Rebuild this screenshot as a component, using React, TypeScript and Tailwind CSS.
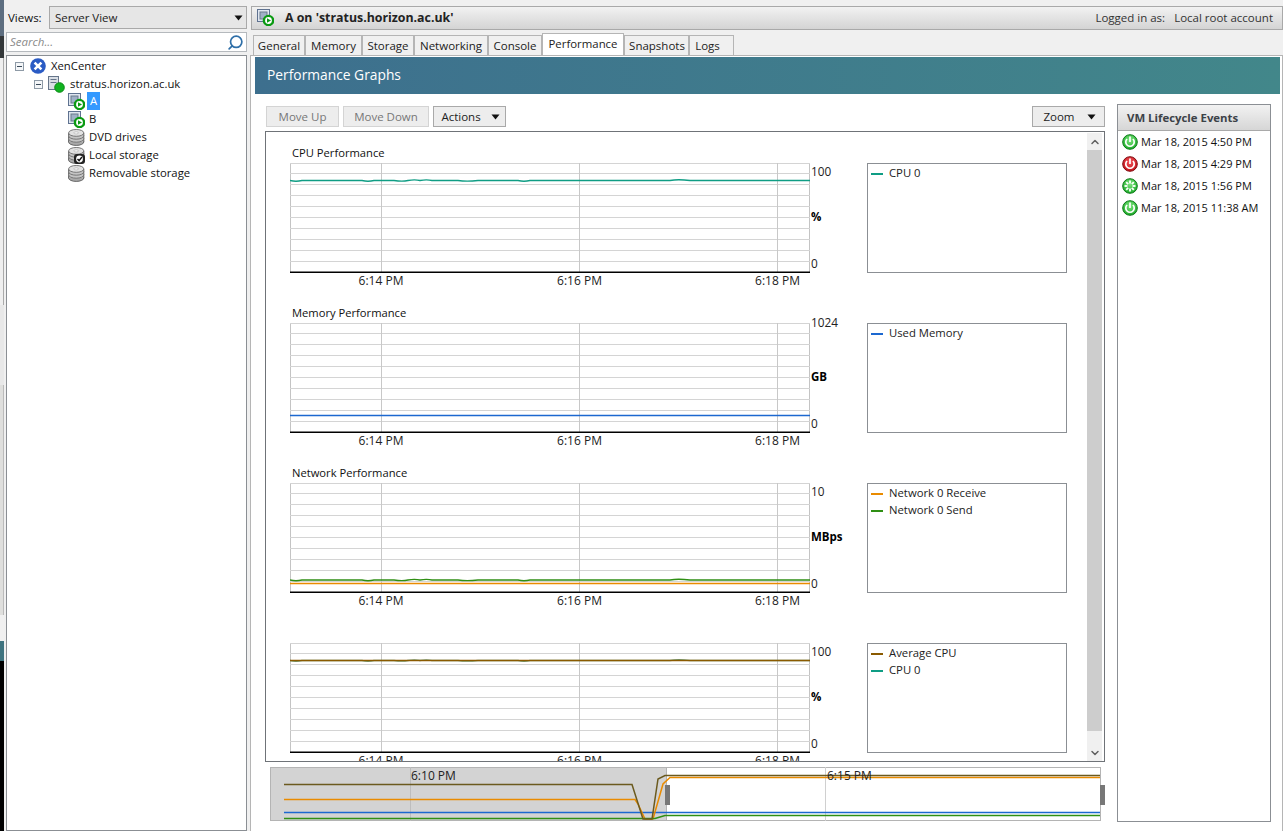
import { ChevronDown, ChevronUp, Search } from "lucide-react";

const ui = "font-['Open_Sans','Noto_Sans',sans-serif]";

const wobble =
  "c4 1 8 1 12 0 h60 c4 1 8 1 12 0 h20 c6 1 10 1 14 0 c5 -1 8 -1 12 0 c5 -1 8 -1 12 0 h26 c6 1 12 1 20 0 h40 c4 1 8 1 12 0 h140 c5 -1 12 -1 20 0 h120";

function Plot({ lines }: { lines: { y: number; color: string; wavy?: boolean }[] }) {
  const rows = [0, 10, 21, 32, 43, 54, 65, 76, 87, 98];
  return (
    <svg width="520" height="110" className="block shrink-0">
      <rect x="0.5" y="0.5" width="519" height="109" fill="white" stroke="#c4c4c4" />
      {rows.map((y) => (
        <line key={y} x1="0" x2="520" y1={y + 0.5} y2={y + 0.5} stroke="#d4d4d4" />
      ))}
      {[91, 289, 487].map((x) => (
        <line key={x} x1={x + 0.5} x2={x + 0.5} y1="0" y2="109" stroke="#c8c8c8" />
      ))}
      {lines.map((l, i) =>
        l.wavy ? (
          <path key={i} d={`M0 ${l.y} ${wobble}`} fill="none" stroke={l.color} strokeWidth="1.3" />
        ) : (
          <line key={i} x1="0" x2="520" y1={l.y} y2={l.y} stroke={l.color} strokeWidth="1.4" />
        )
      )}
      <line x1="0" x2="520" y1="109.2" y2="109.2" stroke="#000" strokeWidth="1.6" />
    </svg>
  );
}

function Graph({
  title,
  top,
  topClass = "",
  unit,
  legend,
  lines,
}: {
  title?: string;
  top: string;
  topClass?: string;
  unit: string;
  legend: { label: string; color: string }[];
  lines: { y: number; color: string; wavy?: boolean }[];
}) {
  return (
    <div className="h-[160px] shrink-0 pl-[24px] pt-[12px]">
      <div className="h-[19px] pl-[2px] text-[11.2px] leading-[17px] text-[#111]">{title}</div>
      <div className="flex">
        <Plot lines={lines} />
        <div className="flex h-[110px] w-[57px] shrink-0 flex-col justify-between pb-[2px] pl-[1px] text-[11.8px] leading-[16px] text-[#222]">
          <span className={topClass}>{top}</span>
          <span className="text-[11.5px] font-bold text-black">{unit}</span>
          <span>0</span>
        </div>
        <div className="h-[110px] w-[200px] shrink-0 border border-[#8b8f94] pl-[3px] pt-[1px]">
          {legend.map((l) => (
            <div key={l.label} className="flex h-[17px] items-center text-[11.3px] text-[#222]">
              <span className={`h-[2px] w-[12px] ${l.color}`} />
              <span className="ml-[6px]">{l.label}</span>
            </div>
          ))}
        </div>
      </div>
      <div className="flex h-[20px] text-[12px] leading-[15px] text-[#222]">
        <span className="w-[182px] shrink-0 text-center">6:14 PM</span>
        <span className="w-[215px] shrink-0 text-center">6:16 PM</span>
        <span className="w-[181px] shrink-0 text-center">6:18 PM</span>
      </div>
    </div>
  );
}

function VmIcon({ className = "" }: { className?: string }) {
  return (
    <svg width="17" height="17" viewBox="0 0 17 17" className={className}>
      <rect x="0.5" y="0.5" width="12" height="12" fill="#dfe6f0" stroke="#5f7290" />
      <rect x="3" y="3" width="7" height="7" fill="#9fb0c6" stroke="#6b7a8c" />
      <circle cx="11.5" cy="11.5" r="4.6" fill="#fff" stroke="#0a9a12" strokeWidth="2.4" />
      <path d="M10 9.2 L14 11.5 L10 13.8 Z" fill="#0a9a12" />
    </svg>
  );
}

function DiskIcon({ check }: { check?: boolean }) {
  return (
    <svg width="17" height="17" viewBox="0 0 17 17">
      <ellipse cx="8.2" cy="13" rx="7.6" ry="3.4" fill="#a9a9a9" stroke="#666" />
      <rect x="0.6" y="4" width="15.2" height="9" fill="#bdbdbd" />
      <line x1="0.6" x2="0.6" y1="4" y2="13" stroke="#666" />
      <line x1="15.8" x2="15.8" y1="4" y2="13" stroke="#666" />
      <ellipse cx="8.2" cy="9.8" rx="7.6" ry="3.4" fill="#c4c4c4" stroke="#777" />
      <ellipse cx="8.2" cy="6.8" rx="7.6" ry="3.4" fill="#c4c4c4" stroke="#777" />
      <ellipse cx="8.2" cy="3.9" rx="7.6" ry="3.4" fill="#e2e2e2" stroke="#777" />
      <ellipse cx="8.2" cy="3.9" rx="2.5" ry="1" fill="#fff" stroke="#999" strokeWidth="0.5" />
      {check && (
        <g>
          <rect x="6" y="7" width="11" height="10" rx="3" fill="#222" />
          <circle cx="11.5" cy="12" r="3.4" fill="#fff" />
          <path d="M9.5 12 L11.1 13.6 L13.9 10" fill="none" stroke="#111" strokeWidth="1.4" />
        </g>
      )}
    </svg>
  );
}

function Expander() {
  return (
    <span className="flex h-[9px] w-[9px] shrink-0 items-center justify-center border border-[#8e9aa6] bg-[#f4f6f8]">
      <span className="h-[1px] w-[5px] bg-[#3a4a5a]" />
    </span>
  );
}

function Caret() {
  return (
    <svg width="9" height="6" viewBox="0 0 9 6" className="shrink-0">
      <path d="M0.5 0.5 H8.5 L4.5 5.5 Z" fill="#111" />
    </svg>
  );
}

function EventIcon({ kind }: { kind: "on" | "off" | "boot" }) {
  const red = kind === "off";
  const rim = red ? "#7f0a0f" : "#0b7a16";
  const id = `event-${kind}`;
  return (
    <svg width="16" height="16" viewBox="0 0 16 16" className="shrink-0">
      <defs>
        <radialGradient id={id} cx="50%" cy="35%" r="70%">
          <stop offset="0%" stopColor={red ? "#f2535a" : "#7fe67f"} />
          <stop offset="100%" stopColor={red ? "#c00d14" : "#14a622"} />
        </radialGradient>
      </defs>
      <circle cx="8" cy="8" r="7.3" fill={`url(#${id})`} stroke={rim} />
      {kind === "boot" ? (
        <g stroke="#fff" strokeWidth="1.8">
          <line x1="8" y1="2.5" x2="8" y2="5.5" />
          <line x1="8" y1="10.5" x2="8" y2="13.5" />
          <line x1="2.5" y1="8" x2="5.5" y2="8" />
          <line x1="10.5" y1="8" x2="13.5" y2="8" />
          <line x1="4.2" y1="4.2" x2="6.2" y2="6.2" />
          <line x1="9.8" y1="9.8" x2="11.8" y2="11.8" />
          <line x1="11.8" y1="4.2" x2="9.8" y2="6.2" />
          <line x1="6.2" y1="9.8" x2="4.2" y2="11.8" />
        </g>
      ) : (
        <g fill="none" stroke="#fff" strokeWidth="1.7">
          <path d="M5.1 5 A4.2 4.2 0 1 0 10.9 5" />
          <line x1="8" y1="2.6" x2="8" y2="8" />
        </g>
      )}
    </svg>
  );
}

function TreeRow({
  icon,
  label,
  selected,
}: {
  icon: React.ReactNode;
  label: string;
  selected?: boolean;
}) {
  return (
    <div className="flex h-[18px] items-center pl-[53px]">
      {icon}
      <span
        className={
          selected
            ? "ml-[2px] bg-[#3399ff] px-[3px] leading-[18px] text-white"
            : "ml-[4px] leading-[18px]"
        }
      >
        {label}
      </span>
    </div>
  );
}

function ToolButton({
  label,
  disabled,
  menu,
  width,
  gap = "gap-[9px]",
}: {
  label: string;
  disabled?: boolean;
  menu?: boolean;
  width: string;
  gap?: string;
}) {
  return (
    <div
      className={`flex h-[21px] items-center justify-center border text-[11.5px] ${gap} ${width} ${
        disabled
          ? "border-[#d4d4d4] bg-[#ededed] text-[#777]"
          : "border-[#a9a9a9] bg-[#ededed] text-[#222]"
      }`}
    >
      {label}
      {menu && <Caret />}
    </div>
  );
}

const tabs = [
  ["General", "w-[52px]"],
  ["Memory", "w-[57px]"],
  ["Storage", "w-[52px]"],
  ["Networking", "w-[74px]"],
  ["Console", "w-[54px]"],
];

export default function App() {
  return (
    <div className={`${ui} flex h-[831px] w-[1283px] overflow-hidden bg-[#f0f0f0] text-[11.5px] text-[#222]`}>
      {/* sliver of the desktop behind the window */}
      <div className="flex w-[6px] shrink-0 flex-col pr-[2px]">
        <div className="h-[36px] bg-[#5d6e80]" />
        <div className="h-[22px] bg-[#34383a]" />
        <div className="h-[247px] border-r border-[#aaa] bg-[#efefef]" />
        <div className="h-[80px] bg-[#e8e8e8]" />
        <div className="h-[230px] border-r border-[#bbb] bg-[#dfdfdd]" />
        <div className="h-[26px] bg-[#f0f0f0]" />
        <div className="h-[20px] bg-[#3f7480]" />
        <div className="flex-1 bg-black" />
      </div>

      <div className="flex w-[241px] shrink-0 flex-col pt-[6px]">
        <div className="flex h-[23px] items-center">
          <span className="ml-[2px] w-[41px] text-[#111]">Views:</span>
          <div className="flex h-[23px] flex-1 items-center justify-between border border-[#a9a9a9] bg-[#e6e6e6] pl-[5px] pr-[3px] text-[#222]">
            Server View
            <Caret />
          </div>
        </div>
        <div className="mt-[3px] flex h-[20px] items-center justify-between border border-[#b5b9bd] bg-white pl-[3px] pr-[2px]">
          <span className="italic text-[#8a8a8a]">Search...</span>
          <Search size={17} strokeWidth={2.4} className="-scale-x-100 text-[#2f6fa8]" />
        </div>
        <div className="mt-[3px] flex-1 border border-[#8b8f94] bg-white pl-[8px] pt-[1px] text-[11.3px] text-[#111]">
          <div className="flex h-[18px] items-center">
            <Expander />
            <svg width="16" height="16" viewBox="0 0 16 16" className="ml-[6px]">
              <circle cx="8" cy="8" r="7.8" fill="#2a5bc4" />
              <path d="M4.6 4.6 L11.4 11.4 M11.4 4.6 L4.6 11.4" stroke="#fff" strokeWidth="2.6" />
            </svg>
            <span className="ml-[5px]">XenCenter</span>
          </div>
          <div className="flex h-[17px] items-center pl-[19px] pt-[1px]">
            <Expander />
            <svg width="17" height="17" viewBox="0 0 17 17" className="ml-[5px]">
              <rect x="0.5" y="0.5" width="10" height="13" fill="#d9dee5" stroke="#66758a" />
              <line x1="2.5" x2="8.5" y1="3.5" y2="3.5" stroke="#66758a" />
              <line x1="2.5" x2="8.5" y1="6.5" y2="6.5" stroke="#66758a" />
              <circle cx="11.5" cy="11.5" r="4.8" fill="#10b320" stroke="#0b8a16" />
            </svg>
            <span className="ml-[5px]">stratus.horizon.ac.uk</span>
          </div>
          <TreeRow icon={<VmIcon />} label="A" selected />
          <TreeRow icon={<VmIcon />} label="B" />
          <TreeRow icon={<DiskIcon />} label="DVD drives" />
          <TreeRow icon={<DiskIcon check />} label="Local storage" />
          <TreeRow icon={<DiskIcon />} label="Removable storage" />
        </div>
      </div>

      <div className="ml-[3px] flex w-[1033px] shrink-0 flex-col pt-[6px]">
        <div className="ml-[1px] flex h-[24px] items-center justify-between border border-[#a9a9a9] bg-gradient-to-b from-[#f2f2f2] to-[#d4d4d4] pl-[5px] pr-[9px]">
          <div className="flex items-center">
            <VmIcon />
            <span className="ml-[11px] text-[12.35px] font-bold text-[#222]">A on 'stratus.horizon.ac.uk'</span>
          </div>
          <span className="text-[#333]">
            Logged in as:<span className="ml-[9px]">Local root account</span>
          </span>
        </div>

        <div className="mt-[3px] flex h-[22px] items-end pl-[3px]">
          {tabs.map(([name, w]) => (
            <div
              key={name}
              className={`flex h-[20px] items-center justify-center border border-b-0 border-[#b5b5b5] bg-[#f0f0f0] ${w}`}
            >
              {name}
            </div>
          ))}
          <div className="flex h-[22px] w-[82px] items-center justify-center border border-b-0 border-[#b5b5b5] bg-white pb-[1px] text-[11.4px]">
            Performance
          </div>
          <div className="flex h-[20px] w-[65px] items-center justify-center border border-b-0 border-[#b5b5b5] bg-[#f0f0f0] pl-[1px]">
            Snapshots
          </div>
          <div className="flex h-[20px] w-[45px] items-center justify-center border border-b-0 border-[#b5b5b5] bg-[#f0f0f0] pr-[8px]">
            Logs
          </div>
        </div>

        <div className="flex flex-1 flex-col border border-b-0 border-[#b5b5b5] bg-white pl-[4px] pr-[2px] pt-[1px]">
          <div className="flex h-[37px] shrink-0 items-center bg-gradient-to-r from-[#3d6f8e] to-[#42878a] pl-[12px] text-[13.8px] text-white">
            Performance Graphs
          </div>

          <div className="flex flex-1 pb-[9px] pl-[10px] pt-[10px]">
            <div className="flex w-[840px] shrink-0 flex-col">
              <div className="flex h-[27px] shrink-0 items-start justify-between pl-[1px] pt-[2px]">
                <div className="flex gap-[4px]">
                  <ToolButton label="Move Up" disabled width="w-[73px]" />
                  <ToolButton label="Move Down" disabled width="w-[86px]" />
                  <ToolButton label="Actions" menu width="w-[73px]" gap="gap-[10px] pl-[2px]" />
                </div>
                <ToolButton label="Zoom" menu width="w-[73px]" gap="gap-[12px] pl-[2px]" />
              </div>

              <div className="flex h-[631px] shrink-0 overflow-hidden border border-[#6f7378]">
                <div className="w-[821px] shrink-0">
                  <Graph
                    title="CPU Performance"
                    top="100"
                    unit="%"
                    legend={[{ label: "CPU 0", color: "bg-[#0f9d84]" }]}
                    lines={[{ y: 17.5, color: "#0f9d84", wavy: true }]}
                  />
                  <Graph
                    title="Memory Performance"
                    top="1024"
                    topClass="-translate-y-[9px]"
                    unit="GB"
                    legend={[{ label: "Used Memory", color: "bg-[#1c68d0]" }]}
                    lines={[{ y: 92.5, color: "#1c68d0" }]}
                  />
                  <Graph
                    title="Network Performance"
                    top="10"
                    unit="MBps"
                    legend={[
                      { label: "Network 0 Receive", color: "bg-[#e98b00]" },
                      { label: "Network 0 Send", color: "bg-[#2f8f14]" },
                    ]}
                    lines={[
                      { y: 100.5, color: "#e98b00" },
                      { y: 97, color: "#2f8f14", wavy: true },
                    ]}
                  />
                  <Graph
                    top="100"
                    unit="%"
                    legend={[
                      { label: "Average CPU", color: "bg-[#8a5a00]" },
                      { label: "CPU 0", color: "bg-[#0f9d84]" },
                    ]}
                    lines={[
                      { y: 17.5, color: "#6f9a70", wavy: true },
                      { y: 17.5, color: "#8a5a00" },
                    ]}
                  />
                </div>
                <div className="mr-[2px] mt-[1px] flex w-[15px] shrink-0 flex-col bg-[#f0f0f0]">
                  <div className="flex h-[17px] items-center justify-center">
                    <ChevronUp size={12} strokeWidth={3} className="text-[#606060]" />
                  </div>
                  <div className="flex-1 bg-[#cdcdcd]" />
                  <div className="flex h-[30px] items-end justify-center pb-[2px]">
                    <ChevronDown size={12} strokeWidth={3} className="text-[#606060]" />
                  </div>
                </div>
              </div>

              <div className="ml-[5px] mt-[5px] h-[54px] w-[831px] shrink-0">
                <svg width="836" height="54" className="block overflow-visible">
                  <rect x="0.5" y="0.5" width="830" height="53" fill="white" stroke="#b4b4b4" />
                  <rect x="0.5" y="0.5" width="396" height="53" fill="#d3d3d3" stroke="#b4b4b4" />
                  <line x1="140.5" x2="140.5" y1="0" y2="54" stroke="#bdbdbd" />
                  <line x1="555.5" x2="555.5" y1="0" y2="54" stroke="#d0d0d0" />
                  <path d="M14 45.5 H830" stroke="#1c68d0" strokeWidth="1.5" fill="none" />
                  <path d="M14 32.5 H365 L368 37 L375 52 L383 52 L393 17 L400 10.5 H830" stroke="#e98b00" strokeWidth="1.5" fill="none" />
                  <path d="M14 51.5 H385 L395 48.5 H830" stroke="#2f8f14" strokeWidth="1.5" fill="none" />
                  <path d="M14 17.5 H362 L373 52 L382 52 L388 12 L395 8.5 H830" stroke="#6b5a1e" strokeWidth="1.5" fill="none" />
                  <text x="141" y="13" fontSize="12" fill="#222">6:10 PM</text>
                  <text x="557" y="13" fontSize="12" fill="#222">6:15 PM</text>
                  <rect x="395" y="18" width="5" height="20" fill="#777" />
                  <rect x="830" y="18" width="5" height="20" fill="#777" />
                </svg>
              </div>
            </div>

            <div className="ml-[12px] flex w-[154px] shrink-0 flex-col border border-[#8b8f94]">
              <div className="flex h-[26px] shrink-0 items-center border-b border-[#a9a9a9] bg-gradient-to-b from-[#f2f2f2] to-[#d6d6d6] pl-[9px] text-[11.4px] font-bold text-[#3c4248]">
                VM Lifecycle Events
              </div>
              <div className="flex flex-col pl-[4px] text-[11px] text-[#111]">
                {[
                  ["on", "Mar 18, 2015 4:50 PM"],
                  ["off", "Mar 18, 2015 4:29 PM"],
                  ["boot", "Mar 18, 2015 1:56 PM"],
                  ["on", "Mar 18, 2015 11:38 AM"],
                ].map(([k, t]) => (
                  <div key={t} className="flex h-[22px] items-center gap-[3px]">
                    <EventIcon kind={k as "on" | "off" | "boot"} />
                    {t}
                  </div>
                ))}
              </div>
            </div>
          </div>
        </div>
      </div>
    </div>
  );
}
